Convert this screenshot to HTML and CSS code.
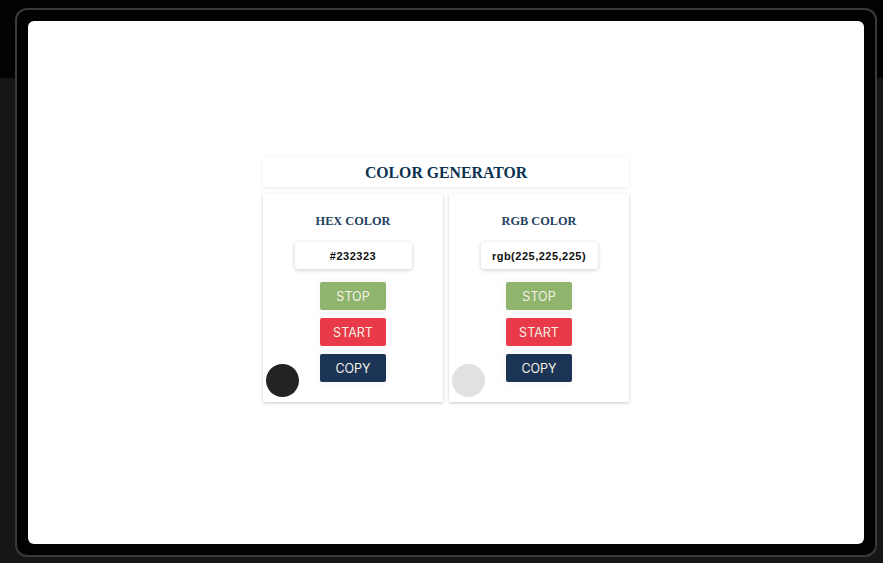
FILE: index.html
```html
<!DOCTYPE html>
<html lang="en">
<head>
  <meta charset="UTF-8" />
  <title>Color Generator</title>
  <link rel="stylesheet" href="styles.css">
</head>
<body>

  <div class="frame">
    <div class="screen">

      <div class="app">
        <!-- Judul -->
        <div class="title-card">
          <h1>COLOR GENERATOR</h1>
        </div>

        <!-- Panel warna -->
        <div class="panels">
          <div class="panel">
            <h3>HEX COLOR</h3>
            <div class="value">#232323</div>
            <div class="buttons">
              <button class="btn stop">STOP</button>
              <button class="btn start">START</button>
              <button class="btn copy">COPY</button>
            </div>
            <div class="swatch" style="background:#232323"></div>
          </div>

          <div class="panel">
            <h3>RGB COLOR</h3>
            <div class="value">rgb(225,225,225)</div>
            <div class="buttons">
              <button class="btn stop">STOP</button>
              <button class="btn start">START</button>
              <button class="btn copy">COPY</button>
            </div>
            <div class="swatch" style="background:rgb(225,225,225)"></div>
          </div>
        </div>
      </div>

    </div>
  </div>

</body>
</html>
```

FILE: styles.css
```css
/* ---------- Latar ---------- */
body{
  margin:0;
  height:563px;
  background:linear-gradient(#020202 0,#020202 78px,#161616 78px);
  font-family:"Liberation Sans",Arial,sans-serif;
  padding:8px 0 0 15px;
  box-sizing:border-box;
}

.frame{
  width:862px;
  height:549px;
  box-sizing:border-box;
  background:#020202;
  border:2px solid #3a3a3a;
  border-radius:12px;
  padding:11px;
}

.screen{
  height:100%;
  background:#fff;
  border-radius:6px;
  display:flex;
  align-items:center;
  justify-content:center;
}

/* ---------- Aplikasi ---------- */
.app{width:366px;margin-top:-6px}

.title-card{
  height:30px;
  background:#fff;
  border-radius:3px;
  box-shadow:0 1px 4px rgba(0,0,0,.08);
  display:flex;
  align-items:center;
  justify-content:center;
  margin-bottom:7px;
}
.title-card h1{
  margin:1px 0 0;
  font-family:"Liberation Serif","Times New Roman",serif;
  font-size:15.8px;
  font-weight:bold;
  color:#0b3350;
}

.panels{display:flex;gap:6px}

.panel{
  position:relative;
  width:180px;
  height:208px;
  box-sizing:border-box;
  background:#fff;
  box-shadow:0 1px 3px rgba(0,0,0,.22);
  display:flex;
  flex-direction:column;
  align-items:center;
  padding-top:19px;
}
.panel h3{
  margin:0;
  font-family:"Liberation Serif","Times New Roman",serif;
  font-size:12.3px;
  line-height:16px;
  font-weight:bold;
  color:#1f4260;
}

.value{
  margin-top:13px;
  width:117px;
  height:27px;
  background:#fff;
  border-radius:3px;
  box-shadow:0 1px 4px rgba(0,0,0,.2);
  display:flex;
  align-items:center;
  justify-content:center;
  font-size:11px;
  font-weight:bold;
  letter-spacing:.5px;
  color:#111;
}

.buttons{
  margin-top:13px;
  display:flex;
  flex-direction:column;
  gap:8px;
}
.btn{
  width:66px;
  height:28px;
  border:0;
  border-radius:2px;
  font-family:Inter,Roboto,sans-serif;
  font-size:12.5px;
  color:#f3f1e4;
  padding:0;
  box-shadow:0 0 8px rgba(0,0,0,.06);
  cursor:pointer;
}
.btn.stop {background:#8fb46e}
.btn.start{background:#e83a49}
.btn.copy {background:#1c3557}

/* bulatan warna */
.swatch{
  position:absolute;
  left:3px;
  bottom:5px;
  width:33px;
  height:33px;
  border-radius:50%;
}
```
